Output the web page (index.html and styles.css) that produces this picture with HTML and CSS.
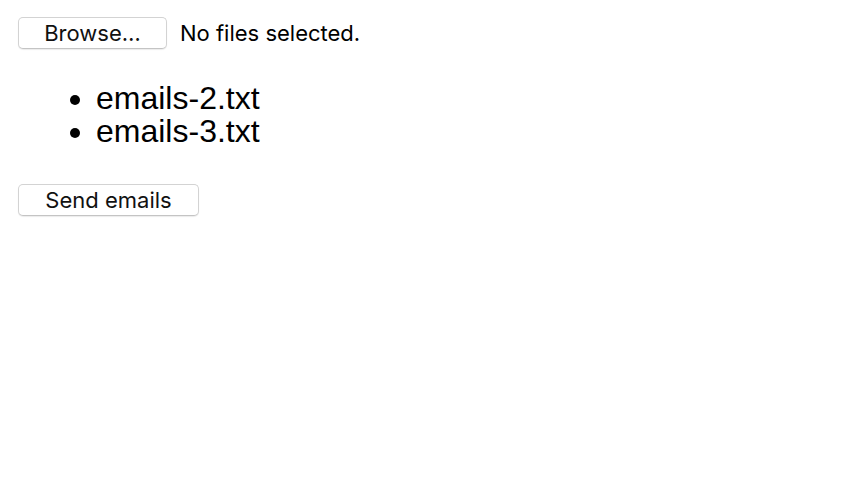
FILE: index.html
```html
<!DOCTYPE html>
<html>
<head>
<meta charset="utf-8">
<link rel="stylesheet" href="styles.css">
</head>
<body>
<div class="file-row">
  <button class="btn btn-browse">Browse…</button>
  <span class="file-status">No files selected.</span>
</div>
<ul class="file-list">
  <li>emails-2.txt</li>
  <li>emails-3.txt</li>
</ul>
<button class="btn btn-send">Send emails</button>
</body>
</html>
```

FILE: styles.css
```css
html, body {
  margin: 0;
  padding: 0;
  background: #fff;
}
body {
  padding: 17px 18px;
  font-family: "Liberation Sans", Arial, sans-serif;
  color: #000;
}
.file-row {
  display: flex;
  align-items: center;
  gap: 13px;
}
.btn {
  font-family: Inter, "Liberation Sans", sans-serif;
  font-size: 22px;
  color: #111;
  background: #fff;
  border: 1px solid #d3d3d3;
  border-bottom-color: #c4c4c4;
  border-radius: 5px;
  box-shadow: 0 1px 1px rgba(0,0,0,0.08);
  height: 32px;
  padding: 0;
  line-height: 30px;
  box-sizing: border-box;
}
.btn-browse {
  width: 149px;
}
.btn-send {
  width: 181px;
  display: block;
}
.file-status {
  font-family: Inter, "Liberation Sans", sans-serif;
  font-size: 22px;
}
.file-list {
  margin: 33px 0 36px 0;
  padding-left: 78px;
  font-size: 32px;
  line-height: 33px;
}
```
